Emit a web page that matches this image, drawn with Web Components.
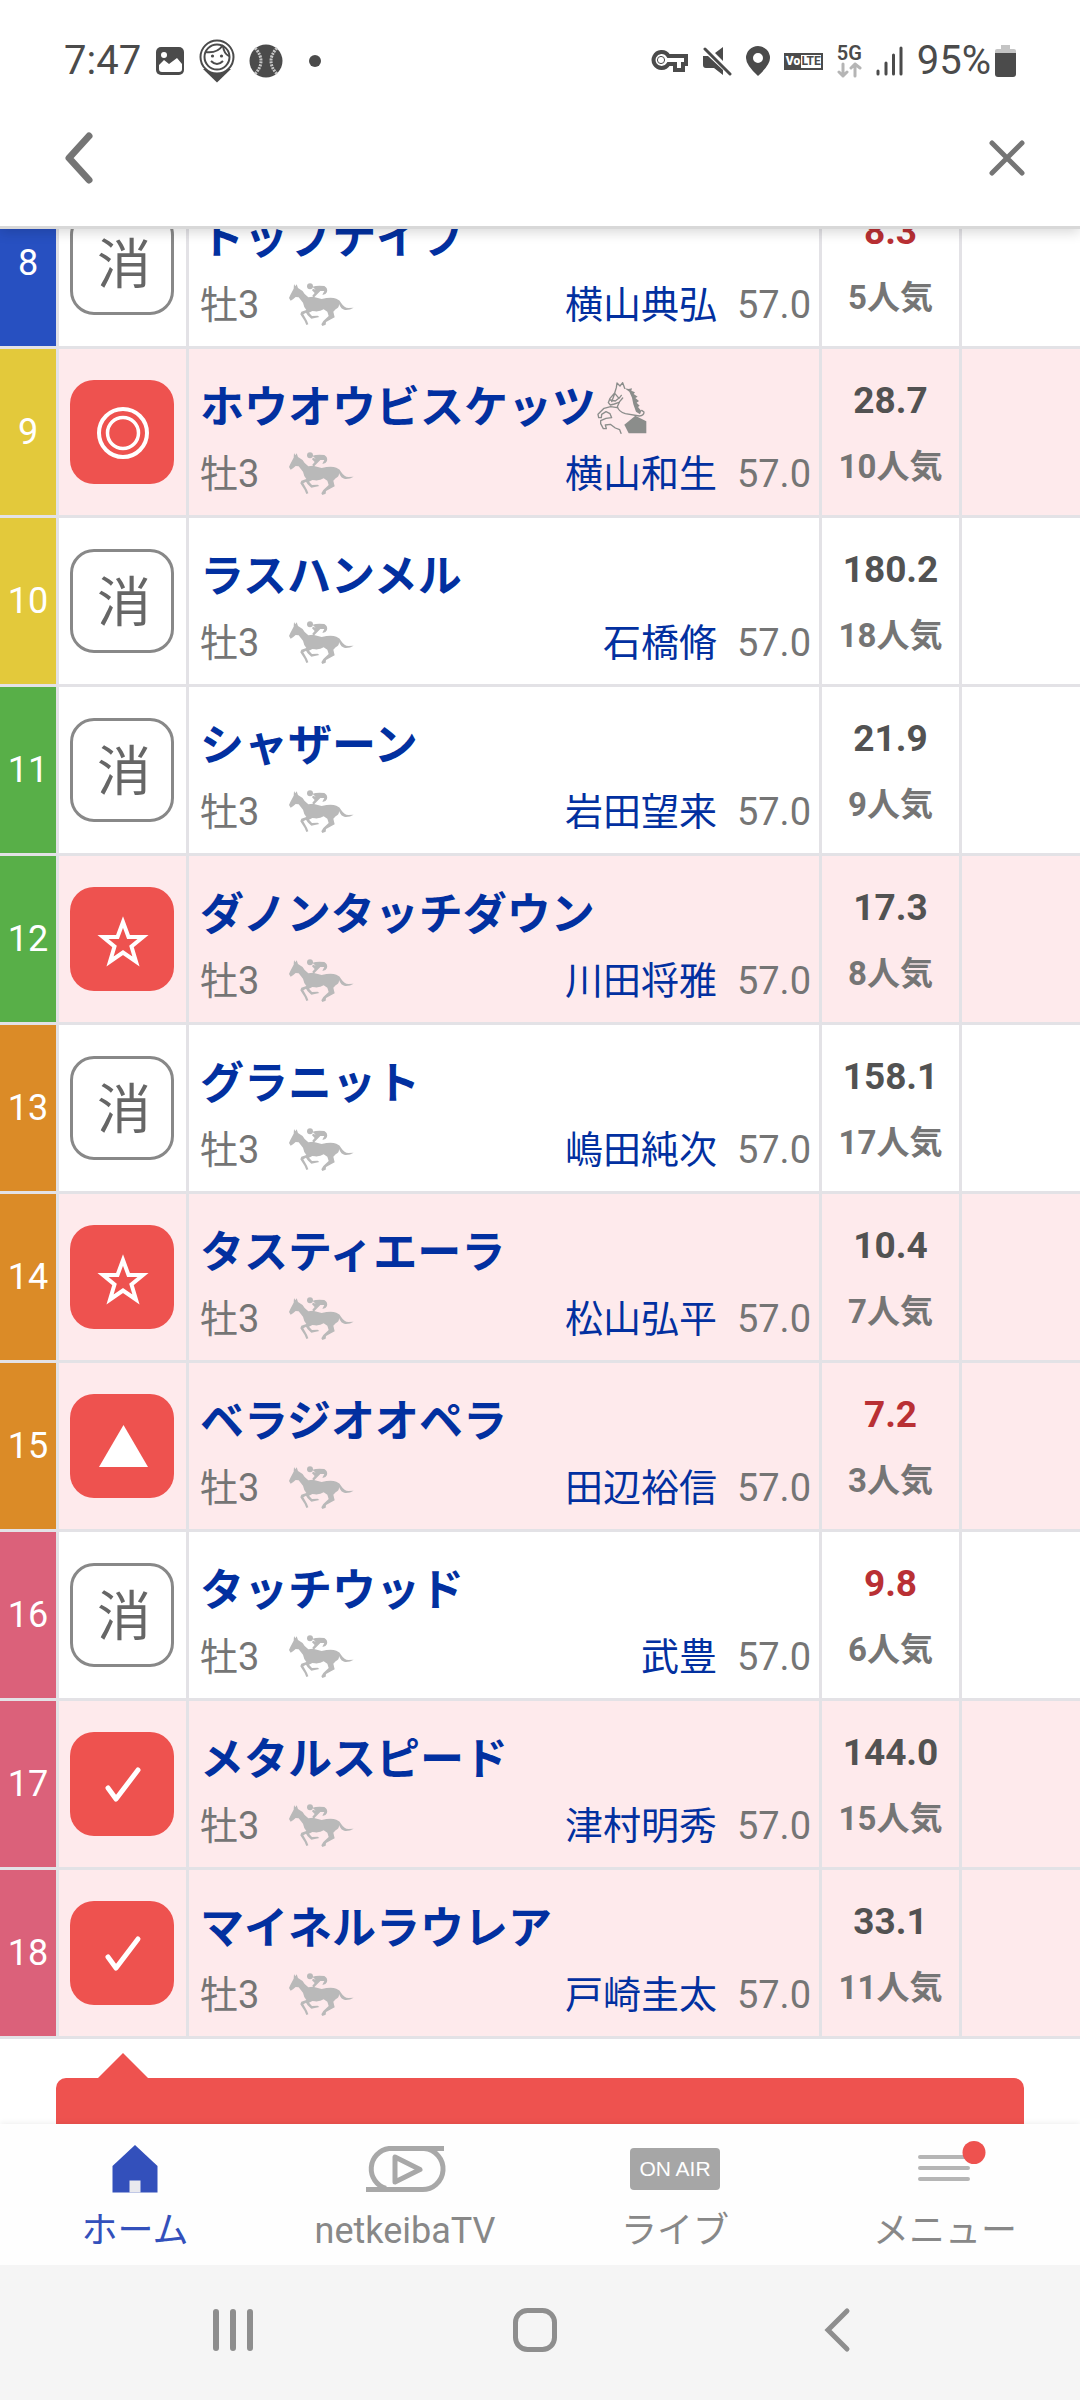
<!DOCTYPE html>
<html lang="ja">
<head>
<meta charset="utf-8">
<meta name="viewport" content="width=device-width, initial-scale=1">
<title>netkeiba</title>
<style>
    body {
        margin: 0;
        font-family: Roboto, "Noto Sans CJK JP", sans-serif;
        background: #fff;
    }
</style>
</head>
<body>
<race-app></race-app>

<script>
const resetCss = `
    :host, * { box-sizing: border-box; }
    svg { display: block; flex: none; }
    button { border: 0; padding: 0; background: none; font: inherit; color: inherit; cursor: pointer; }
    a { color: inherit; text-decoration: none; }
`;

class StatusBar extends HTMLElement {
    connectedCallback() {
        this.attachShadow({mode: 'open'}).innerHTML = `
        <style>
            ${resetCss}
            :host {
                display: flex;
                align-items: center;
                justify-content: space-between;
                height: 90px;
                padding: 32px 64px 0 64px;
                font-size: 40px;
                line-height: 48px;
                color: #4b4b4b;
            }
            .group { display: flex; align-items: center; gap: 14px; }
            .power { display: flex; align-items: center; gap: 4px; }
            .volte {
                display: flex;
                width: 39px;
                height: 17px;
                border: 2px solid #4b4b4b;
                font: bold 12px/13px Roboto, sans-serif;
            }
            .volte b { flex: 1; background: #4b4b4b; color: #fff; }
            .net { width: 25px; }
            .net span { display: block; font-weight: 600; font-size: 20px; line-height: 17px; }
            .dot { margin-left: 12px; }
        </style>
        <div class="group">
            <span>7:47</span>
            <svg width="30" height="30" viewBox="0 0 30 30"><rect x="1" y="1" width="28" height="28" rx="5" fill="#4b4b4b"/><circle cx="9" cy="9" r="3" fill="#fff"/><path d="M4 23v-4l5-5 5 4 8-6 5 6v5q0 3-3 3H7q-3 0-3-3z" fill="#fff"/></svg>
            <svg width="36" height="44" viewBox="0 0 36 44"><path d="M4 30 18 43.500 32 30z" fill="#4b4b4b"/><circle cx="18" cy="18" r="16.500" fill="#fff" stroke="#4b4b4b" stroke-width="2"/><circle cx="18" cy="18" r="12.500" fill="none" stroke="#4b4b4b" stroke-width="2"/><path d="M6 13q12 2 18-7M24 7q1 8 6 10" fill="none" stroke="#4b4b4b" stroke-width="2"/><circle cx="13.500" cy="17" r="1.600" fill="#4b4b4b"/><circle cx="22.500" cy="17" r="1.600" fill="#4b4b4b"/><path d="M12 22q6 6 12 0" fill="none" stroke="#4b4b4b" stroke-width="2"/></svg>
            <svg width="34" height="34" viewBox="0 0 34 34"><circle cx="17" cy="17" r="16.500" fill="#4b4b4b"/><path d="M6 4q12 13 0 26M28 4q-12 13 0 26" fill="none" stroke="#c8c8c8" stroke-width="3" stroke-dasharray="2 1"/></svg>
            <svg class="dot" width="12" height="12" viewBox="0 0 12 12"><circle cx="6" cy="6" r="6" fill="#4b4b4b"/></svg>
        </div>
        <div class="group">
            <svg width="37" height="24" viewBox="0 0 37 24"><path d="M10 3a8 8 0 1 0 7.500 12H24v6h8v-6h3V7H17.500A8 8 0 0 0 10 3z" fill="none" stroke="#4b4b4b" stroke-width="4"/><circle cx="10" cy="11" r="3.600" fill="none" stroke="#4b4b4b" stroke-width="1"/></svg>
            <svg width="30" height="30" viewBox="0 0 30 30" fill="#4b4b4b"><path d="M1 10h5l15 14v5l-9-7H4q-3 0-3-3zM13 7l8-6v14z"/><path d="M3 3l25 25" stroke="#4b4b4b" stroke-width="3" stroke-linecap="round"/></svg>
            <svg width="24" height="30" viewBox="0 0 24 30"><path d="M12 0A12 12 0 0 0 0 12q0 7 12 18 12-11 12-18A12 12 0 0 0 12 0zm0 7a5 5 0 1 1 0 10 5 5 0 0 1 0-10z" fill="#4b4b4b"/></svg>
            <span class="volte"><b>Vo</b>LTE</span>
            <span class="net"><span>5G</span><svg width="25" height="16" viewBox="0 0 25 16" fill="none" stroke="#b5b5b5" stroke-width="3" stroke-linecap="round" stroke-linejoin="round"><path d="M6 2v12M2 10l4 4 4-4M18 14V2M14 6l4-4 5 4"/></svg></span>
            <svg width="27" height="30" viewBox="0 0 27 30" stroke="#4b4b4b" stroke-width="3" stroke-linecap="round"><path d="M2 25v3M10 17v11M17.500 9v19M25 2v26"/></svg>
            <span class="power">95%<svg width="21" height="32" viewBox="0 0 21 32"><path d="M0 8V6q0-2 2-2h4V0h9v4h4q2 0 2 2v2z" fill="#c4c4c4"/><path d="M0 8h21v21q0 3-3 3H3q-3 0-3-3z" fill="#4b4b4b"/></svg></span>
        </div>`;
    }
}
customElements.define('status-bar', StatusBar);

class PageHeader extends HTMLElement {
    connectedCallback() {
        this.attachShadow({mode: 'open'}).innerHTML = `
        <style>
            ${resetCss}
            :host {
                display: block;
                position: relative;
                z-index: 1;
                flex: none;
                background: #fff;
                border-bottom: 3px solid #d8d8d8;
                box-shadow: 0 3px 12px rgba(0, 0, 0, .16);
            }
            nav {
                display: flex;
                align-items: center;
                justify-content: space-between;
                height: 136px;
                padding: 0 54px 0 62px;
            }
        </style>
        <slot></slot>
        <nav>
            <button aria-label="戻る"><svg width="32" height="54" viewBox="0 0 32 54"><path d="M27 5 7 27l20 22" fill="none" stroke="#757575" stroke-width="7" stroke-linecap="round" stroke-linejoin="round"/></svg></button>
            <button aria-label="閉じる"><svg width="38" height="38" viewBox="0 0 38 38"><path d="M4 4l30 30M34 4 4 34" stroke="#757575" stroke-width="5" stroke-linecap="round"/></svg></button>
        </nav>`;
    }
}
customElements.define('page-header', PageHeader);

const marks = {
    '◎': '<circle cx="53" cy="53" r="24" stroke-width="4"/><circle cx="53" cy="53" r="15.500" stroke-width="3.500"/>',
    '☆': '<path d="M53 35 58.500 50H73L61.500 59.500 66 74.500 53 65.500 40 74.500 44.500 59.500 33 50H47.500z" stroke-width="4" stroke-miterlimit="8"/>',
    '▲': '<path d="M53.500 31 78 73H29z" fill="#fff" stroke="none"/>',
    '✓': '<path d="M38 56l8 11 22-29" stroke-width="5" stroke-linecap="round" stroke-linejoin="round"/>'
};

class MarkButton extends HTMLElement {
    connectedCallback() {
        const mark = this.getAttribute('mark');
        const picked = mark in marks;
        this.attachShadow({mode: 'open'}).innerHTML = `
        <style>
            ${resetCss}
            :host { display: block; }
            button {
                display: flex;
                align-items: center;
                justify-content: center;
                width: 104px;
                height: 104px;
                border-radius: 24px;
                font-size: 54px;
                line-height: 60px;
            }
            .off { padding: 6px 0 0 4px; border: 3px solid #888; background: #fff; color: #666; }
            .on { background: #ee524f; }
        </style>
        <button class="${picked ? 'on' : 'off'}" aria-label="印 ${mark}">${picked
            ? `<svg width="104" height="104" viewBox="0 0 104 104" fill="none" stroke="#fff">${marks[mark]}</svg>`
            : mark}</button>`;
    }
}
customElements.define('mark-button', MarkButton);

// running style icon: galloping horse with jockey
class HorseIcon extends HTMLElement {
    connectedCallback() {
        this.attachShadow({mode: 'open'}).innerHTML = `
        <style>
            :host { display: block; }
            svg { display: block; }
        </style>
        <svg width="66" height="44" viewBox="51 33 198 132" fill="#b9b9b9">
            <path d="M54 78 58 69 68 50 69 36 73 43 77 37 81 48Q94 54 101 66L112 76 126 74 152 81Q180 74 196 80 207 84 211 94 220 108 232 108L248 107Q236 115 222 114 210 112 204 96 205 107 194 112L187 119 191 136 180 142 165 150 164 158 154 162 151 157 157 147 173 132 169 119 158 112Q148 119 132 118L124 117 114 122 123 132 140 131 145 135 121 140 110 130 105 122 97 127 108 146 112 157 106 159 101 147 88 127 91 119 106 114Q98 104 96 92L83 76 74 75 66 82 59 86z"/>
            <circle cx="117" cy="43" r="9"/>
            <path d="M124 44Q140 39 160 42 171 48 168 60 163 70 154 68L160 57 148 57 137 68 128 77 124 71 131 63 123 55 126 50 134 53z"/>
        </svg>`;
    }
}
customElements.define('horse-icon', HorseIcon);

// rearing horse shown after the name
class RearingIcon extends HTMLElement {
    connectedCallback() {
        this.attachShadow({mode: 'open'}).innerHTML = `
        <style>
            :host { display: block; }
            svg { display: block; }
        </style>
        <svg width="52" height="52" viewBox="108 63 156 156" fill="none" stroke="#8b8d8b" stroke-width="4" stroke-linejoin="round" stroke-linecap="round">
            <path d="M194 82 188 65 180 75 171 66 169 80 164 96 150 112 145 125 151 132 163 129 177 124 188 111M165 98 177 112 184 103M151 117 166 120 177 111M164 98 155 122"/>
            <path d="M178 124 172 137Q176 152 196 158L238 165Q252 164 252 153L245 148"/>
            <path d="M172 140 152 137 132 142 114 160 116 170 124 170 125 160 138 152 150 158 155 170 138 172 122 179 122 188 130 203 139 203 136 192 151 190 166 201 179 206 183 217"/>
            <path d="M194 82 206 84 216 82 214 89 225 94 221 99 233 107 226 111 237 120 230 125 239 134 234 138 244 150 240 160 228 152 220 130 216 110 208 92z" fill="#8b8d8b" stroke="none"/>
            <path d="M226 164 259 181V217H206L193 191z" fill="#8b8d8b" stroke="none"/>
        </svg>`;
    }
}
customElements.define('rearing-icon', RearingIcon);

const horses = [
    {no: 8, frame: 'blue', mark: '消', name: 'トップナイフ', jockey: '横山典弘', odds: '8.3', rank: 5},
    {no: 9, frame: 'yellow', mark: '◎', name: 'ホウオウビスケッツ', jockey: '横山和生', odds: '28.7', rank: 10, rearing: true},
    {no: 10, frame: 'yellow', mark: '消', name: 'ラスハンメル', jockey: '石橋脩', odds: '180.2', rank: 18},
    {no: 11, frame: 'green', mark: '消', name: 'シャザーン', jockey: '岩田望来', odds: '21.9', rank: 9},
    {no: 12, frame: 'green', mark: '☆', name: 'ダノンタッチダウン', jockey: '川田将雅', odds: '17.3', rank: 8},
    {no: 13, frame: 'orange', mark: '消', name: 'グラニット', jockey: '嶋田純次', odds: '158.1', rank: 17},
    {no: 14, frame: 'orange', mark: '☆', name: 'タスティエーラ', jockey: '松山弘平', odds: '10.4', rank: 7},
    {no: 15, frame: 'orange', mark: '▲', name: 'ベラジオオペラ', jockey: '田辺裕信', odds: '7.2', rank: 3},
    {no: 16, frame: 'pink', mark: '消', name: 'タッチウッド', jockey: '武豊', odds: '9.8', rank: 6},
    {no: 17, frame: 'pink', mark: '✓', name: 'メタルスピード', jockey: '津村明秀', odds: '144.0', rank: 15},
    {no: 18, frame: 'pink', mark: '✓', name: 'マイネルラウレア', jockey: '戸崎圭太', odds: '33.1', rank: 11}
];

class RaceTable extends HTMLElement {
    connectedCallback() {
        this.attachShadow({mode: 'open'}).innerHTML = `
        <style>
            ${resetCss}
            :host { display: block; }
            table { width: 100%; table-layout: fixed; border-spacing: 0; }
            .c-no { width: 59px; }
            .c-mark { width: 130px; }
            .c-odds { width: 140px; }
            .c-memo { width: 118px; }
            td, th {
                height: 169px;
                padding: 0;
                border-right: 3px solid #e3e2e6;
                border-bottom: 3px solid #e3e2e6;
                background: #fff;
                vertical-align: top;
            }
            td:last-child { border-right: 0; }
            .picked td { background: #feeaec; }
            th {
                vertical-align: middle;
                font-size: 36px;
                font-weight: 400;
                line-height: 40px;
                text-align: center;
                color: #fff;
            }
            .blue { background: #2750c1; }
            .yellow { background: #e3c93b; }
            .green { background: #58af48; }
            .orange { background: #db8b27; }
            .pink { background: #db617a; }
            .mark { padding: 31px 11px 0; }
            .horse { padding: 33px 8px 0 11px; }
            .name {
                display: flex;
                align-items: center;
                font-size: 44px;
                font-weight: 700;
                line-height: 52px;
                color: #0230a0;
            }
            .info {
                display: flex;
                align-items: center;
                margin-top: 18px;
                font-size: 38px;
                line-height: 44px;
                color: #757575;
            }
            .info horse-icon { margin-left: 29px; }
            .info a { margin: 0 20px 0 auto; color: #0230a0; }
            .odds { padding-top: 30px; text-align: center; font-weight: 700; color: #525252; }
            .odds div { font-size: 37px; line-height: 44px; }
            .odds .hot { color: #b93034; }
            .odds .rank { margin-top: 24px; font-size: 33px; line-height: 40px; color: #757575; }
        </style>
        <table>
            <colgroup><col class="c-no"><col class="c-mark"><col><col class="c-odds"><col class="c-memo"></colgroup>
            <tbody>${horses.map(h => this.row(h)).join('')}</tbody>
        </table>`;
    }

    row(h) {
        return `
            <tr class="${h.mark === '消' ? '' : 'picked'}">
                <th scope="row" class="${h.frame}">${h.no}</th>
                <td class="mark"><mark-button mark="${h.mark}"></mark-button></td>
                <td class="horse">
                    <div class="name"><a href="#horse${h.no}">${h.name}</a>${h.rearing ? '<rearing-icon></rearing-icon>' : ''}</div>
                    <div class="info"><span>牡3</span><horse-icon></horse-icon><a href="#jockey${h.no}">${h.jockey}</a><span>57.0</span></div>
                </td>
                <td class="odds">
                    <div class="${Number(h.odds) < 10 ? 'hot' : ''}">${h.odds}</div>
                    <div class="rank">${h.rank}人気</div>
                </td>
                <td></td>
            </tr>`;
    }
}
customElements.define('race-table', RaceTable);

class MarkBalloon extends HTMLElement {
    connectedCallback() {
        this.attachShadow({mode: 'open'}).innerHTML = `
        <style>
            :host { display: block; margin: 14px 56px 0; }
            .arrow {
                width: 50px;
                height: 25px;
                margin-left: 42px;
                background: #ee524f;
                clip-path: polygon(50% 0, 100% 100%, 0 100%);
            }
            .box { height: 120px; border-radius: 10px; background: #ee524f; }
        </style>
        <div class="arrow"></div>
        <div class="box"></div>`;
    }
}
customElements.define('mark-balloon', MarkBalloon);

class TabBar extends HTMLElement {
    connectedCallback() {
        this.attachShadow({mode: 'open'}).innerHTML = `
        <style>
            ${resetCss}
            :host {
                display: block;
                position: relative;
                z-index: 1;
                flex: none;
                background: #fefefe;
                box-shadow: 0 -1px 6px rgba(0, 0, 0, .07);
            }
            nav { display: grid; grid-template-columns: repeat(4, 1fr); }
            a {
                display: flex;
                flex-direction: column;
                align-items: center;
                gap: 18px;
                padding: 21px 0 14px;
                font-size: 36px;
                line-height: 40px;
                color: #888;
            }
            .current { color: #3350bb; }
            .icon { display: flex; align-items: center; justify-content: center; height: 48px; }
            .icon svg { overflow: visible; }
            .air {
                width: 90px;
                border-radius: 4px;
                background: #a6a6a6;
                color: #fff;
                font: 21px/42px "Liberation Sans", sans-serif;
                text-align: center;
            }
        </style>
        <nav>
            <a href="#home" class="current"><span class="icon"><svg width="46" height="48" viewBox="0 0 46 48"><path d="M23 0 45.500 21V47.500H.5V21z" fill="#3350bb"/><path d="M17.500 35.500h11v12h-11z" fill="#e9e9ee"/></svg></span>ホーム</a>
            <a href="#tv"><span class="icon"><svg width="80" height="48" viewBox="0 0 80 48" fill="none" stroke="#a8a8a8" stroke-width="5"><path d="M79 3.500H24a20.500 20.500 0 0 0-3 40M1 44.500H56a20.500 20.500 0 0 0 3-41"/><path d="M30 12v25L55 24.500z" stroke-linejoin="round"/></svg></span>netkeibaTV</a>
            <a href="#live"><span class="icon"><span class="air">ON AIR</span></span>ライブ</a>
            <a href="#menu"><span class="icon"><svg width="80" height="48" viewBox="0 0 80 48"><path d="M15 12h48M15 23h48M15 34h48" stroke="#b5b5b5" stroke-width="4" stroke-linecap="round"/><circle cx="69" cy="7.500" r="11.500" fill="#ee524f"/></svg></span>メニュー</a>
        </nav>`;
    }
}
customElements.define('tab-bar', TabBar);

class SystemBar extends HTMLElement {
    connectedCallback() {
        this.attachShadow({mode: 'open'}).innerHTML = `
        <style>
            ${resetCss}
            :host {
                display: flex;
                flex: none;
                position: relative;
                z-index: 1;
                align-items: center;
                justify-content: space-between;
                height: 135px;
                padding: 0 212px 6px 210px;
                background: #f5f5f5;
            }
        </style>
        <button aria-label="履歴"><svg width="46" height="46" viewBox="0 0 46 46"><path d="M6 5v36M23 5v36M40 5v36" stroke="#8e8e8e" stroke-width="6" stroke-linecap="round"/></svg></button>
        <button aria-label="ホーム画面"><svg width="46" height="46" viewBox="0 0 46 46"><rect x="3.500" y="3.500" width="39" height="39" rx="12" fill="none" stroke="#8e8e8e" stroke-width="5"/></svg></button>
        <button aria-label="戻る"><svg width="54" height="46" viewBox="0 0 54 46"><path d="M33 4 14 23l19 19" fill="none" stroke="#8e8e8e" stroke-width="5" stroke-linecap="round"/></svg></button>`;
    }
}
customElements.define('system-bar', SystemBar);

class RaceApp extends HTMLElement {
    connectedCallback() {
        this.attachShadow({mode: 'open'}).innerHTML = `
        <style>
            :host { display: flex; flex-direction: column; height: 100vh; }
            main { flex: 1; min-height: 0; overflow: hidden; }
            /* list is scrolled part way into its first row */
            race-table { margin-top: -49px; }
        </style>
        <page-header><status-bar></status-bar></page-header>
        <main>
            <race-table></race-table>
            <mark-balloon></mark-balloon>
        </main>
        <tab-bar></tab-bar>
        <system-bar></system-bar>`;
    }
}
customElements.define('race-app', RaceApp);
</script>
</body>
</html>
